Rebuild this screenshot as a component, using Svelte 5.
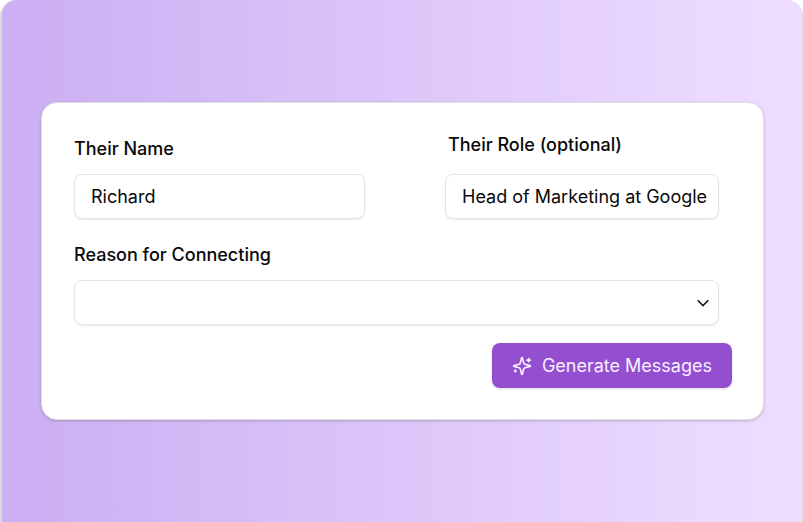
<script lang="ts">
	const reasons = ['Networking', 'Job opportunity', 'Sales outreach', 'Partnership'];

	let name = $state('Richard');
	let role = $state('Head of Marketing at Google');
	let reason = $state('');
</script>

<main class="panel">
	<form class="card" onsubmit={(e) => e.preventDefault()}>
		<div class="fields">
			<div class="row">
				<div class="field name">
					<label for="name">Their Name</label>
					<input id="name" type="text" bind:value={name} />
				</div>
				<div class="field role">
					<label for="role">Their Role (optional)</label>
					<input id="role" type="text" bind:value={role} />
				</div>
			</div>

			<div class="field">
				<label for="reason">Reason for Connecting</label>
				<div class="select">
					<select id="reason" bind:value={reason}>
						<option value=""></option>
						{#each reasons as item}
							<option value={item}>{item}</option>
						{/each}
					</select>
					<svg class="chevron" viewBox="0 0 20 20" aria-hidden="true">
						<path d="M4.7 7.3 10 12.6l5.3-5.3" />
					</svg>
				</div>
			</div>
		</div>

		<button class="generate" type="submit">
			<svg viewBox="0 0 24 24" aria-hidden="true">
				<path
					d="M9.937 15.5A2 2 0 0 0 8.5 14.063l-6.135-1.582a.5.5 0 0 1 0-.962L8.5 9.936A2 2 0 0 0 9.937 8.5l1.582-6.135a.5.5 0 0 1 .963 0L14.063 8.5A2 2 0 0 0 15.5 9.937l6.135 1.581a.5.5 0 0 1 0 .964L15.5 14.063a2 2 0 0 0-1.437 1.437l-1.582 6.135a.5.5 0 0 1-.963 0z"
				/>
				<path d="M20 3v4M22 5h-4M4 17v2M5 18H3" />
			</svg>
			Generate Messages
		</button>
	</form>
</main>

<style>
	:global(body) {
		margin: 0;
		background: #fff;
	}

	.panel {
		box-sizing: border-box;
		min-height: 100vh;
		padding: 102px 38px 102px 39px;
		border: solid #dcdadf;
		border-width: 0 1px 0 2px;
		border-radius: 16px 16px 0 0;
		background: linear-gradient(90deg, #ccb0f3 5%, #eddcff 94%);
		font-family: Inter, 'Liberation Sans', sans-serif;
		font-size: 18px;
		line-height: 24px;
		color: #09090b;
	}

	.card {
		display: flex;
		flex-direction: column;
		gap: 18px;
		padding: 30px 31px 31px 32px;
		border: 1px solid #e4e0e8;
		border-radius: 16px;
		background: #fff;
		box-shadow: 0 1px 3px rgb(0 0 0 / 20%);
	}

	.fields {
		display: flex;
		flex-direction: column;
		gap: 24px;
		padding-right: 13px;
	}

	.row {
		display: flex;
		align-items: flex-end;
		justify-content: space-between;
		gap: 80px;
	}

	.field {
		display: flex;
		flex-direction: column;
		gap: 13px;
	}

	.name {
		flex: 291;
		min-width: 0;
	}

	.role {
		flex: 274;
		min-width: 0;
		gap: 17px;
	}

	.role label {
		padding-left: 3px;
	}

	label {
		font-weight: 500;
	}

	input,
	select {
		box-sizing: border-box;
		width: 100%;
		height: 45px;
		padding: 0 8px 0 16px;
		border: 1px solid #e4e4e7;
		border-radius: 8px;
		background: #fff;
		box-shadow: 0 1px 2px rgb(0 0 0 / 8%);
		font: inherit;
		color: inherit;
	}

	.select {
		position: relative;
	}

	select {
		display: block;
		appearance: none;
	}

	.chevron {
		position: absolute;
		top: 50%;
		right: 6px;
		width: 20px;
		height: 20px;
		transform: translateY(-50%);
		fill: none;
		stroke: #18181b;
		stroke-width: 1.6;
		pointer-events: none;
	}

	.generate {
		display: flex;
		align-items: center;
		align-self: flex-end;
		gap: 10px;
		height: 45px;
		padding: 0 20px;
		border: 0;
		border-radius: 8px;
		background: #944fd1;
		box-shadow: 0 1px 3px rgb(0 0 0 / 15%);
		font: inherit;
		color: #f8f0ff;
		cursor: pointer;
	}

	.generate svg {
		width: 20px;
		height: 20px;
		fill: none;
		stroke: currentColor;
		stroke-width: 2;
		stroke-linecap: round;
		stroke-linejoin: round;
	}
</style>
